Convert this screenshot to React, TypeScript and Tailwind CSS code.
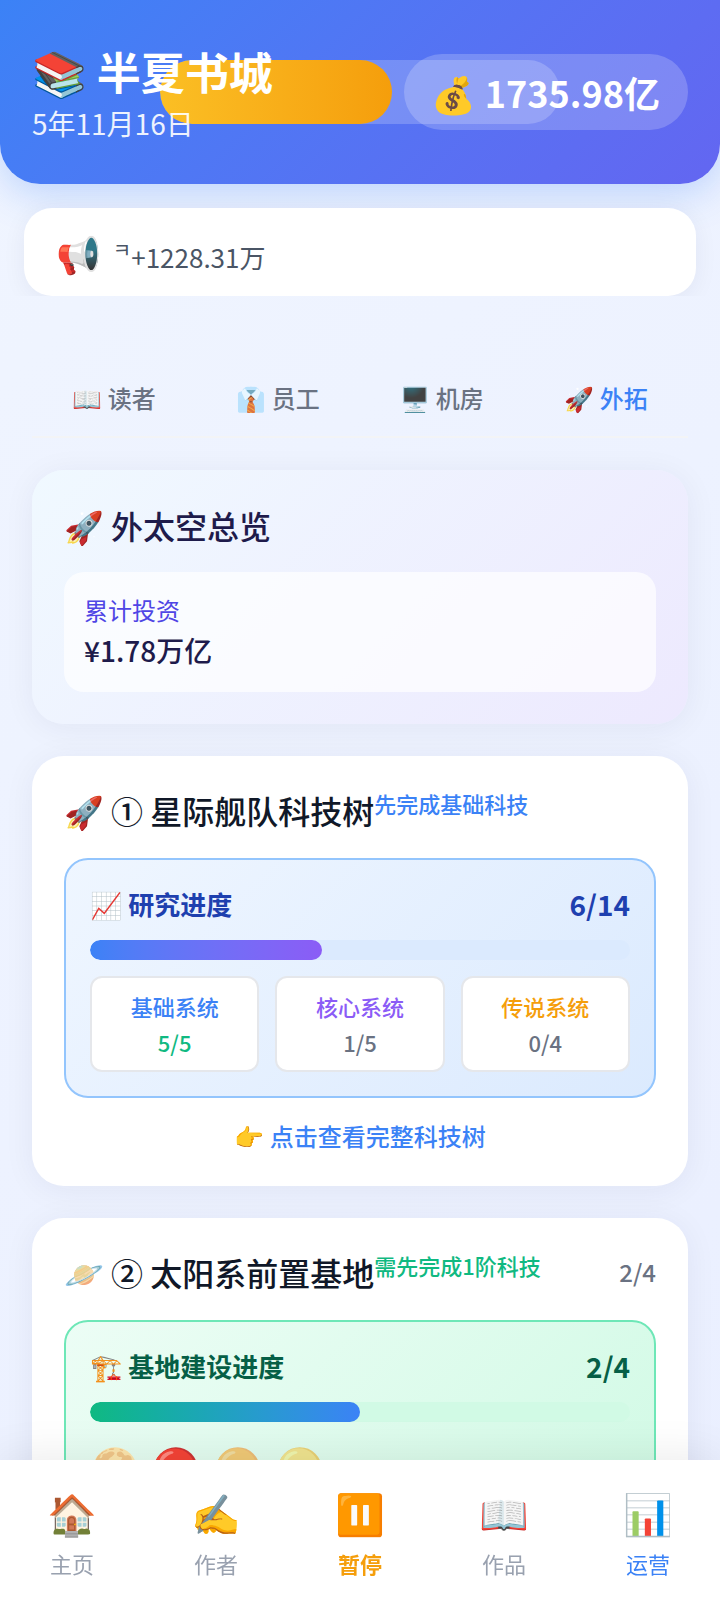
import { useState } from 'react';

const TABS = [
  { id: 'readers', icon: '📖', label: '读者' },
  { id: 'staff', icon: '👔', label: '员工' },
  { id: 'servers', icon: '🖥️', label: '机房' },
  { id: 'space', icon: '🚀', label: '外拓' }
];

const NAV = [
  { id: 'home', icon: '🏠', label: '主页', color: 'text-gray-400' },
  { id: 'authors', icon: '✍️', label: '作者', color: 'text-gray-400' },
  { id: 'pause', icon: '⏸️', label: '暂停', color: 'text-[#f59e0b] font-bold' },
  { id: 'works', icon: '📖', label: '作品', color: 'text-gray-400' },
  { id: 'operate', icon: '📊', label: '运营', color: 'text-[#3b82f6]' }
];

const SYSTEMS = [
  { name: '基础系统', color: 'text-[#3b82f6]', done: 5, total: 5 },
  { name: '核心系统', color: 'text-[#8b5cf6]', done: 1, total: 5 },
  { name: '传说系统', color: 'text-[#f59e0b]', done: 0, total: 4 }
];

const BASES = [
  { icon: '🌕', built: true },
  { icon: '🔴', built: true },
  { icon: '🟠', built: false },
  { icon: '🟡', built: false }
];

function Header() {
  return (
    <header className="relative flex h-[184px] items-center justify-between rounded-b-[40px] bg-linear-135 from-[#3b82f6] to-[#6366f1] px-8 text-white shadow-[0_8px_40px_rgba(59,130,246,0.3)]">
      {/* Year progress sits behind the title and the balance */}
      <div className="absolute top-[60px] left-1/2 h-16 w-[400px] -translate-x-1/2 overflow-hidden rounded-full bg-white/20">
        <div className="h-full rounded-full bg-linear-to-r from-[#fbbf24] to-[#f59e0b]" style={{ width: '58%' }} />
      </div>
      <div className="relative pt-1">
        <h1 className="text-[44px] leading-[56px] font-bold">📚 半夏书城</h1>
        <p className="mt-0.5 text-[28px] leading-[44px] opacity-90">5年11月16日</p>
      </div>
      <div className="relative rounded-full bg-white/20 px-7 py-3 text-[36px] leading-[52px] font-bold">💰 1735.98亿</div>
    </header>
  );
}

function Progress({ percent, track, fill }: { percent: number; track: string; fill: string }) {
  return (
    <div className={`h-5 overflow-hidden rounded-full ${track}`}>
      <div className={`h-full rounded-full ${fill}`} style={{ width: `${percent}%` }} />
    </div>
  );
}

export default function App() {
  const [tab, setTab] = useState('space');

  return (
    <div className="h-screen overflow-hidden bg-linear-135 from-[#f0f5ff] to-[#eaefff] font-['Noto_Sans_CJK_SC','Noto_Color_Emoji',sans-serif] text-gray-900">
      <Header />

      <div className="relative overflow-hidden px-6 pt-6">
        <div className="flex h-[88px] items-center gap-3 rounded-[28px] bg-white px-8 shadow-[0_4px_24px_rgba(30,27,75,0.06)]">
          <span className="text-[36px] leading-[48px]">📢</span>
          <p className="pt-2.5 text-[26px] leading-10 whitespace-nowrap text-gray-600">
            <span className="align-super text-[20px] leading-none">ㅋ</span>+1228.31万
          </p>
        </div>
      </div>

      <main className="px-8 pt-16">
        <div className="mb-8 grid grid-cols-4 border-b-2 border-[#f3f4f6]">
          {TABS.map((item) => (
            <button
              key={item.id}
              onClick={() => setTab(item.id)}
              className={`h-[76px] text-[24px] leading-9 font-medium ${tab === item.id ? 'text-[#3b82f6]' : 'text-gray-500'}`}
            >
              {item.icon} {item.label}
            </button>
          ))}
        </div>

        <section className="mb-8 rounded-[32px] bg-linear-135 from-[#f0f9ff] to-[#ede9fe] p-8 shadow-[0_4px_32px_rgba(30,27,75,0.06)]">
          <h2 className="mb-6 text-[32px] leading-[46px] font-medium text-[#1e1b4b]">🚀 外太空总览</h2>
          <div className="rounded-[20px] bg-white/70 p-5">
            <p className="text-[24px] leading-9 text-[#4f46e5]">累计投资</p>
            <p className="text-[28px] leading-[44px] font-medium text-[#1e1b4b]">¥1.78万亿</p>
          </div>
        </section>

        <section className="mb-8 rounded-[32px] bg-white p-8 shadow-[0_4px_32px_rgba(30,27,75,0.06)]">
          <div className="mb-[26px] flex items-start">
            <h2 className="text-[32px] leading-[44px] font-medium">🚀 ① 星际舰队科技树</h2>
            <span className="text-[22px] leading-[30px] font-medium text-[#3b82f6]">先完成基础科技</span>
          </div>
          <div className="rounded-3xl border-2 border-[#93c5fd] bg-linear-135 from-[#eff6ff] to-[#dbeafe] p-6">
            <div className="mb-4 flex items-center justify-between font-bold text-[#1e40af]">
              <h3 className="text-[26px] leading-10">📈 研究进度</h3>
              <span className="text-[28px] leading-10">6/14</span>
            </div>
            <Progress percent={43} track="bg-[#dbeafe]" fill="bg-linear-to-r from-[#3b82f6] to-[#8b5cf6]" />
            <div className="mt-4 grid grid-cols-3 gap-4 text-center text-[22px] leading-9 font-medium">
              {SYSTEMS.map((system) => (
                <div key={system.name} className="rounded-xl border-2 border-[#e5e7eb] bg-white px-2 py-[10px]">
                  <div className={system.color}>{system.name}</div>
                  <div className={system.done === system.total ? 'text-[#10b981]' : 'text-gray-500'}>
                    {system.done}/{system.total}
                  </div>
                </div>
              ))}
            </div>
          </div>
          <button className="mt-5 block w-full text-center text-[24px] leading-9 font-medium text-[#3b82f6]">👉 点击查看完整科技树</button>
        </section>

        <section className="rounded-[32px] bg-white p-8 shadow-[0_4px_32px_rgba(30,27,75,0.06)]">
          <div className="mb-[26px] flex items-start">
            <h2 className="text-[32px] leading-[44px] font-medium">🪐 ② 太阳系前置基地</h2>
            <span className="text-[22px] leading-[30px] font-medium text-[#10b981]">需先完成1阶科技</span>
            <span className="ml-auto text-[24px] leading-[44px] font-medium text-gray-500">2/4</span>
          </div>
          <div className="rounded-3xl border-2 border-[#6ee7b7] bg-linear-135 from-[#ecfdf5] to-[#d1fae5] p-6">
            <div className="mb-4 flex items-center justify-between font-bold text-[#065f46]">
              <h3 className="text-[26px] leading-10">🏗️ 基地建设进度</h3>
              <span className="text-[28px] leading-10">2/4</span>
            </div>
            <Progress percent={50} track="bg-[#d1fae5]" fill="bg-linear-to-r from-[#10b981] to-[#3b82f6]" />
            <div className="mt-4 flex gap-3 text-[40px] leading-[56px]">
              {BASES.map((base) => (
                <span key={base.icon} className={base.built ? '' : 'opacity-50'}>
                  {base.icon}
                </span>
              ))}
            </div>
          </div>
        </section>
      </main>

      <nav className="fixed inset-x-0 bottom-0 grid h-[140px] grid-cols-5 bg-white shadow-[0_-4px_40px_rgba(0,0,0,0.08)]">
        {NAV.map((item) => (
          <button key={item.id} className="flex flex-col items-center pt-5">
            <span className="text-[40px] leading-[64px]">{item.icon}</span>
            <span className={`text-[22px] leading-[38px] ${item.color}`}>{item.label}</span>
          </button>
        ))}
      </nav>
    </div>
  );
}
